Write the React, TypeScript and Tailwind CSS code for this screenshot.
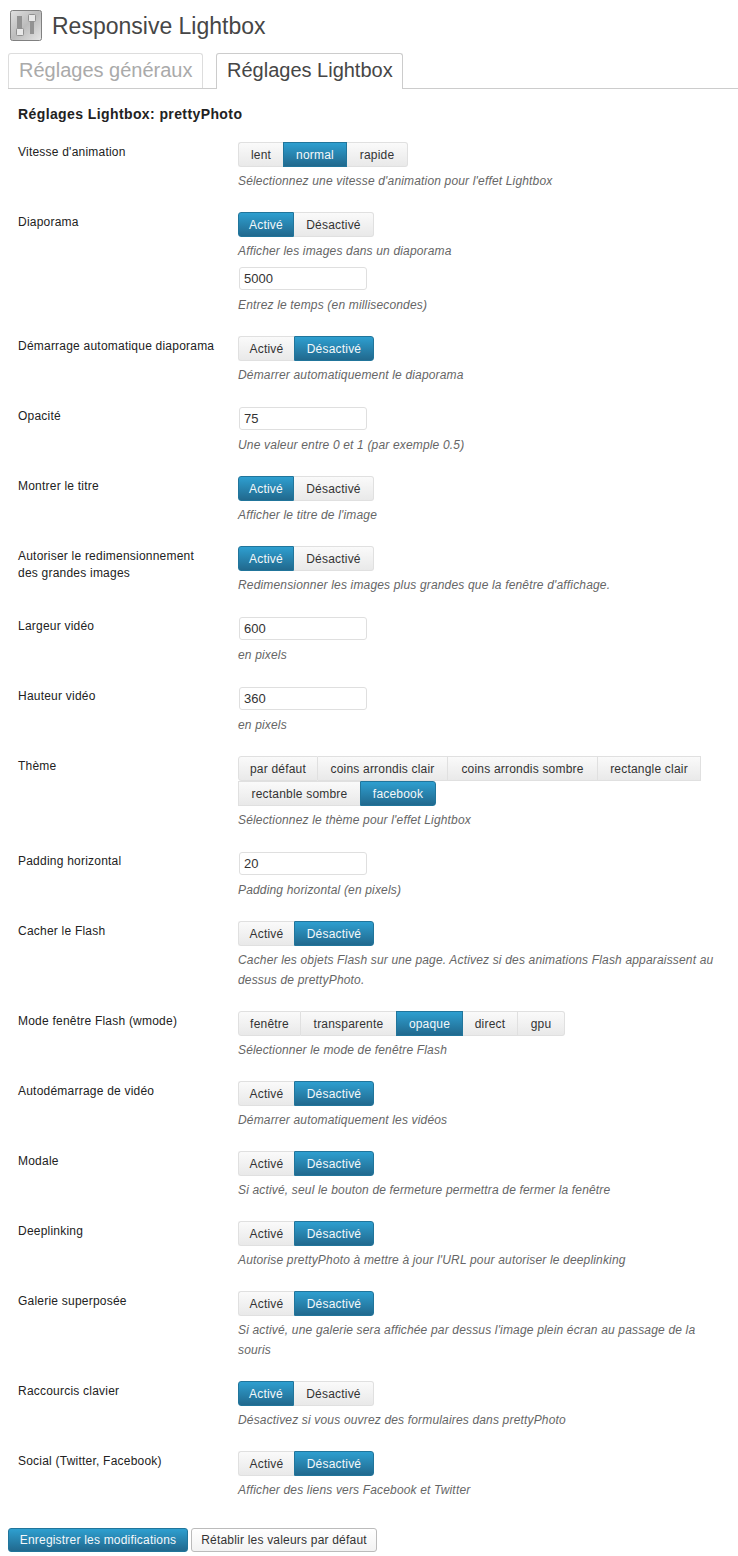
import React from "react";
import clsx from "clsx";

type Row = {
  label: React.ReactNode;
  buttons?: string[];
  active?: string;
  input?: string;
  desc: string;
  input2?: string;
  desc2?: string;
};

const ON = "Activé";
const OFF = "Désactivé";

// button widths as measured on the reference, the text is centred in them
const WIDTHS: Record<string, string> = {
  lent: "w-[45px]",
  normal: "w-[64px]",
  rapide: "w-[61px]",
  [ON]: "w-[56px]",
  [OFF]: "w-[80px]",
  "par défaut": "w-[80px]",
  "coins arrondis clair": "w-[130px]",
  "coins arrondis sombre": "w-[150px]",
  "rectangle clair": "w-[103px]",
  "rectanble sombre": "w-[122px]",
  facebook: "w-[76px]",
  "fenêtre": "w-[63px]",
  transparente: "w-[95px]",
  opaque: "w-[67px]",
  direct: "w-[55px]",
  gpu: "w-[47px]",
};

const ROWS: Row[] = [
  { label: "Vitesse d'animation", buttons: ["lent", "normal", "rapide"], active: "normal", desc: "Sélectionnez une vitesse d'animation pour l'effet Lightbox" },
  { label: "Diaporama", buttons: [ON, OFF], active: ON, desc: "Afficher les images dans un diaporama", input2: "5000", desc2: "Entrez le temps (en millisecondes)" },
  { label: "Démarrage automatique diaporama", buttons: [ON, OFF], active: OFF, desc: "Démarrer automatiquement le diaporama" },
  { label: "Opacité", input: "75", desc: "Une valeur entre 0 et 1 (par exemple 0.5)" },
  { label: "Montrer le titre", buttons: [ON, OFF], active: ON, desc: "Afficher le titre de l'image" },
  { label: <>Autoriser le redimensionnement<br />des grandes images</>, buttons: [ON, OFF], active: ON, desc: "Redimensionner les images plus grandes que la fenêtre d'affichage." },
  { label: "Largeur vidéo", input: "600", desc: "en pixels" },
  { label: "Hauteur vidéo", input: "360", desc: "en pixels" },
  { label: "Thème", buttons: ["par défaut", "coins arrondis clair", "coins arrondis sombre", "rectangle clair", "rectanble sombre", "facebook"], active: "facebook", desc: "Sélectionnez le thème pour l'effet Lightbox" },
  { label: "Padding horizontal", input: "20", desc: "Padding horizontal (en pixels)" },
  { label: "Cacher le Flash", buttons: [ON, OFF], active: OFF, desc: "Cacher les objets Flash sur une page. Activez si des animations Flash apparaissent au dessus de prettyPhoto." },
  { label: "Mode fenêtre Flash (wmode)", buttons: ["fenêtre", "transparente", "opaque", "direct", "gpu"], active: "opaque", desc: "Sélectionner le mode de fenêtre Flash" },
  { label: "Autodémarrage de vidéo", buttons: [ON, OFF], active: OFF, desc: "Démarrer automatiquement les vidéos" },
  { label: "Modale", buttons: [ON, OFF], active: OFF, desc: "Si activé, seul le bouton de fermeture permettra de fermer la fenêtre" },
  { label: "Deeplinking", buttons: [ON, OFF], active: OFF, desc: "Autorise prettyPhoto à mettre à jour l'URL pour autoriser le deeplinking" },
  { label: "Galerie superposée", buttons: [ON, OFF], active: OFF, desc: "Si activé, une galerie sera affichée par dessus l'image plein écran au passage de la souris" },
  { label: "Raccourcis clavier", buttons: [ON, OFF], active: ON, desc: "Désactivez si vous ouvrez des formulaires dans prettyPhoto" },
  { label: "Social (Twitter, Facebook)", buttons: [ON, OFF], active: OFF, desc: "Afficher des liens vers Facebook et Twitter" },
];

function ButtonSet({ buttons, active }: { buttons: string[]; active?: string }) {
  return (
    <div className="flex flex-wrap">
      {buttons.map((b, i) => {
        const isActive = b === active;
        const startsLine = i === 0 || b === "rectanble sombre";
        return (
          <span
            key={b}
            className={clsx(
              WIDTHS[b],
              "h-[25px] text-center leading-[24px] text-[12px] tracking-[0.2px] border",
              i === 0 && "rounded-l-[3px]",
              i === buttons.length - 1 && "rounded-r-[3px]",
              isActive
                ? "text-[#f4f8fa] border-[#21759b] bg-gradient-to-b from-[#2e9fd0] to-[#21698e]"
                : "text-[#333] border-[#e0e0e0] bg-gradient-to-b from-[#fafafa] to-[#e9e9e9]",
              !isActive && !startsLine && "border-l-0",
              !isActive && buttons[i + 1] === active && "border-r-0"
            )}
          >
            {b}
          </span>
        );
      })}
    </div>
  );
}

function TextBox({ value }: { value: string }) {
  return (
    <div className="py-px pl-px">
      <div className="w-[128px] h-[23px] px-[4px] leading-[22px] text-[13px] text-[#333] bg-white border border-[#dfdfdf] rounded-[3px]">
        {value}
      </div>
    </div>
  );
}

function Desc({ children }: { children: string }) {
  return <p className="mt-[4px] max-w-[480px] leading-[20px] text-[12px] tracking-[0.167px] italic text-[#666]">{children}</p>;
}

function SliderIcon() {
  return (
    <svg width="32" height="31" viewBox="0 0 32 31" className="shrink-0">
      <defs>
        <linearGradient id="iconBg" x1="0" y1="0" x2="1" y2="1">
          <stop offset="0" stopColor="#e0e0e0" />
          <stop offset="0.5" stopColor="#bcbcbc" />
          <stop offset="1" stopColor="#e6e6e6" />
        </linearGradient>
      </defs>
      <rect x="0.5" y="0.5" width="31" height="30" rx="2" fill="url(#iconBg)" stroke="#808080" />
      <rect x="7" y="6" width="5" height="14" fill="#929292" />
      <rect x="20" y="10" width="4" height="14" fill="#929292" />
      <rect x="6.5" y="18.5" width="7" height="7" rx="1" fill="#e8e8e8" stroke="#909090" />
      <rect x="18.5" y="4.5" width="7" height="7" rx="1" fill="#e8e8e8" stroke="#909090" />
    </svg>
  );
}

export default function App() {
  return (
    <div className="w-[738px] h-[1556px] overflow-hidden bg-white font-['Liberation_Sans',Arial,sans-serif] text-[#333]">
      <div className="flex items-center h-[53px] pl-[10px] pb-[8px] pt-[6px]">
        <SliderIcon />
        <h2 className="ml-[10px] text-[23px] leading-[30px] text-[#464646]">Responsive Lightbox</h2>
      </div>

      <div className="flex ml-[8px] h-[36px] border-b border-[#ccc]">
        <span className="w-[195px] h-[35px] pl-[10px] text-[20px] leading-[33px] text-[#aaa] border border-b-0 border-[#ddd] rounded-t-[3px]">
          Réglages généraux
        </span>
        <span className="ml-[13px] w-[187px] h-[36px] pl-[10px] text-[20px] leading-[33px] text-[#464646] bg-white border border-b-0 border-[#ccc] rounded-t-[3px]">
          Réglages Lightbox
        </span>
      </div>

      <h3 className="mt-[16px] ml-[18px] text-[14px] tracking-[0.4px] leading-[18px] font-bold text-[#222]">Réglages Lightbox: prettyPhoto</h3>

      <div className="mt-[9px]">
        {ROWS.map((row, i) => (
          <div key={i} className="flex pl-[18px] pt-[10px] pb-[11px]">
            <div className="w-[220px] shrink-0 pt-[2px] text-[12px] tracking-[0.22px] leading-[17px] text-[#222]">{row.label}</div>
            <div className="flex-1">
              {row.buttons && <ButtonSet buttons={row.buttons} active={row.active} />}
              {row.input && <TextBox value={row.input} />}
              <Desc>{row.desc}</Desc>
              {row.input2 && (
                <div className="mt-[5px]">
                  <TextBox value={row.input2} />
                </div>
              )}
              {row.desc2 && <Desc>{row.desc2}</Desc>}
            </div>
          </div>
        ))}
      </div>

      <div className="flex mt-[17px] ml-[8px] gap-[3px]">
        <span className="w-[180px] h-[24px] text-center leading-[23px] text-[12px] tracking-[0.2px] text-[#f4f8fa] border border-[#21759b] rounded-[3px] bg-gradient-to-b from-[#2e9fd0] to-[#21698e]">
          Enregistrer les modifications
        </span>
        <span className="w-[186px] h-[24px] text-center leading-[23px] text-[12px] tracking-[0.2px] text-[#333] border border-[#bbb] rounded-[3px] bg-gradient-to-b from-white to-[#f2f2f2]">
          Rétablir les valeurs par défaut
        </span>
      </div>
    </div>
  );
}
